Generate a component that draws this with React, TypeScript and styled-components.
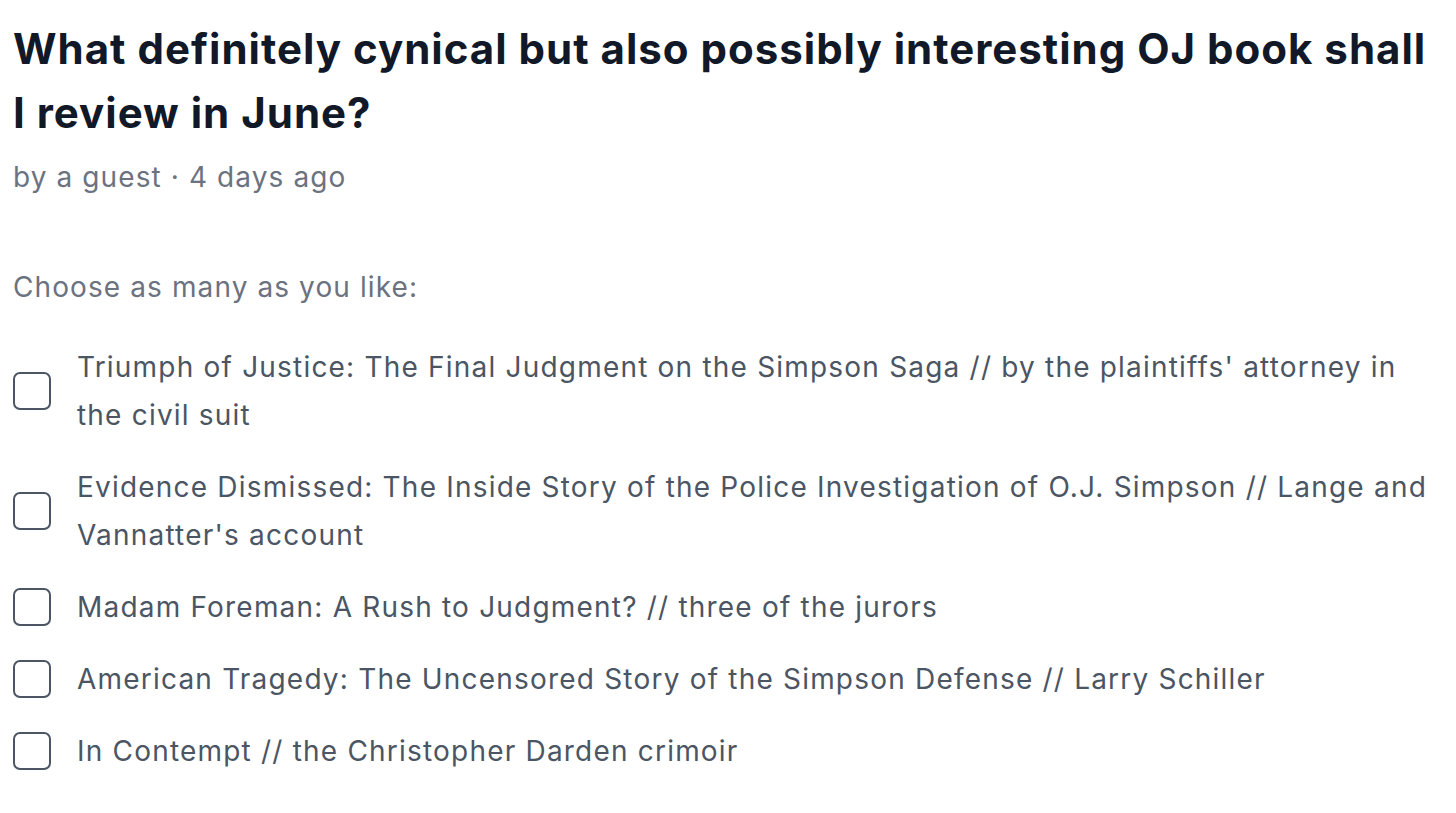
import { createGlobalStyle, styled } from 'styled-components'

const GlobalStyle = createGlobalStyle`
  body {
    margin: 0;
    background: #fff;
    font-family: Inter, 'Noto Sans', sans-serif;
  }
`

const Pagina = styled.div`
  padding: 17px 20px 0 13px;
`

const Titulo = styled.h1`
  margin: 0;
  font-size: 42px;
  line-height: 64px;
  font-weight: 650;
  color: #111827;
  letter-spacing: 1px;
`

const Meta = styled.div`
  margin-top: 11px;
  font-size: 28px;
  line-height: 42px;
  color: #6b7280;
  letter-spacing: 1.1px;
`

const Instrucao = styled(Meta)`
  margin-top: 68px;
`

const Lista = styled.ul`
  list-style: none;
  margin: 35px 0 0;
  padding: 0;
  display: flex;
  flex-direction: column;
  gap: 24px;
`

const Opcao = styled.li`
  display: flex;
  align-items: center;
  gap: 26px;
`

const Caixa = styled.span`
  flex: none;
  width: 38px;
  height: 38px;
  box-sizing: border-box;
  border: 2px solid #4b5563;
  border-radius: 7px;
`

const Texto = styled.span`
  font-size: 28px;
  line-height: 48px;
  color: #4b5563;
  letter-spacing: 1.2px;
`

const opcoes = [
  "Triumph of Justice: The Final Judgment on the Simpson Saga // by the plaintiffs' attorney in the civil suit",
  "Evidence Dismissed: The Inside Story of the Police Investigation of O.J. Simpson // Lange and Vannatter's account",
  'Madam Foreman: A Rush to Judgment? // three of the jurors',
  'American Tragedy: The Uncensored Story of the Simpson Defense // Larry Schiller',
  'In Contempt // the Christopher Darden crimoir',
]

const App = () => {
  return (
    <>
      <GlobalStyle />
      <Pagina>
        <Titulo>
          What definitely cynical but also possibly interesting OJ book shall I
          review in June?
        </Titulo>
        <Meta>by a guest · 4 days ago</Meta>
        <Instrucao>Choose as many as you like:</Instrucao>
        <Lista>
          {opcoes.map((texto) => (
            <Opcao key={texto}>
              <Caixa />
              <Texto>{texto}</Texto>
            </Opcao>
          ))}
        </Lista>
      </Pagina>
    </>
  )
}

export default App
